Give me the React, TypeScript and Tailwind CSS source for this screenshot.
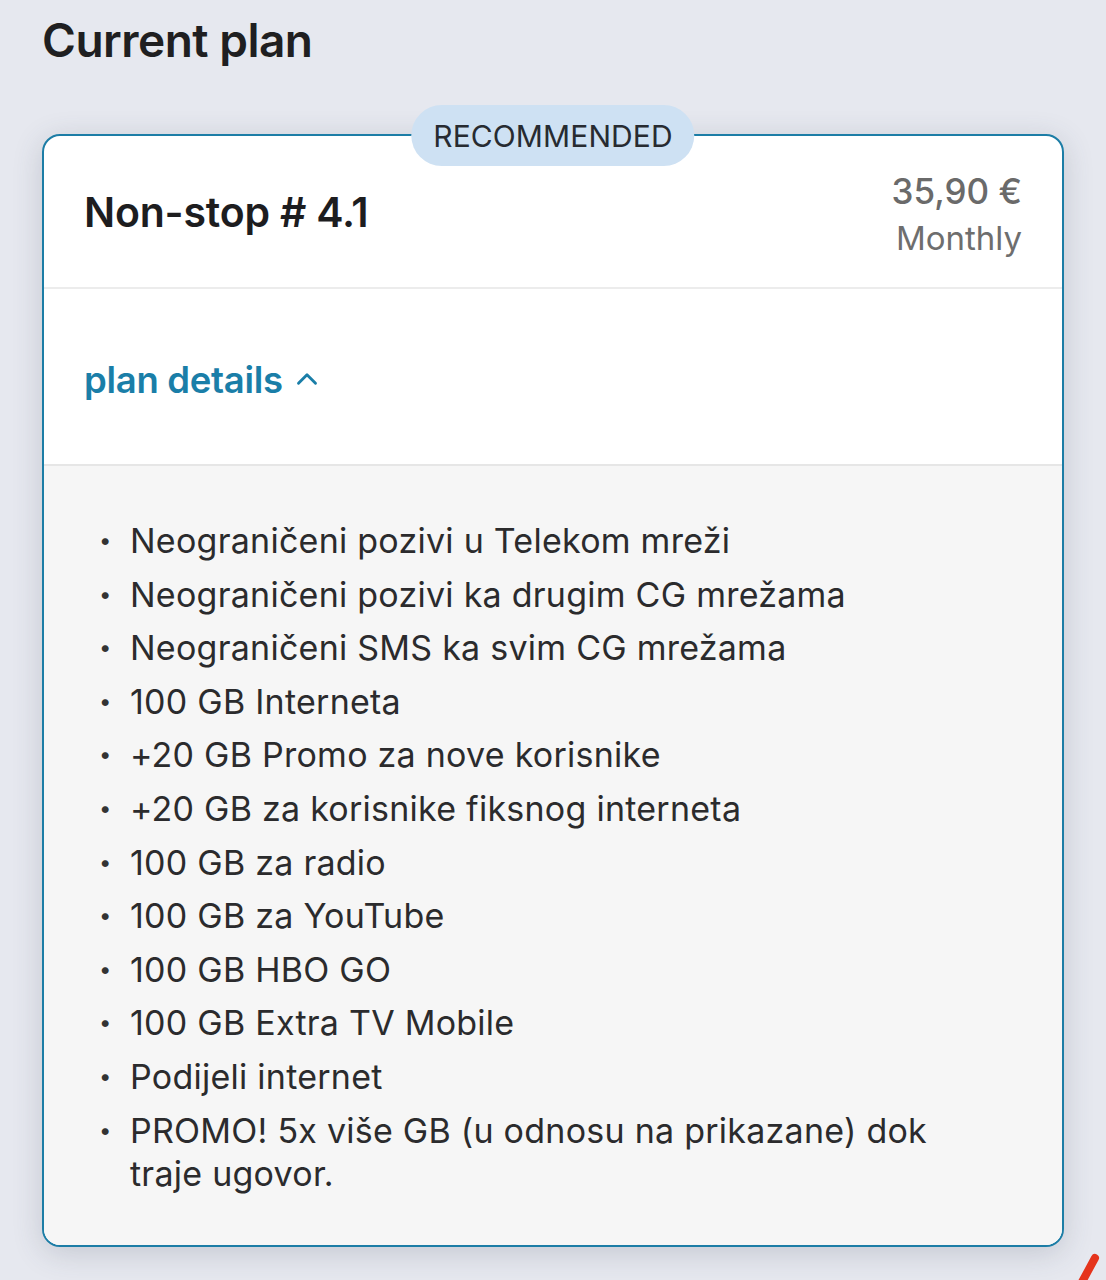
import { ChevronUp } from 'lucide-react';

const features = [
  'Neograničeni pozivi u Telekom mreži',
  'Neograničeni pozivi ka drugim CG mrežama',
  'Neograničeni SMS ka svim CG mrežama',
  '100 GB Interneta',
  '+20 GB Promo za nove korisnike',
  '+20 GB za korisnike fiksnog interneta',
  '100 GB za radio',
  '100 GB za YouTube',
  '100 GB HBO GO',
  '100 GB Extra TV Mobile',
  'Podijeli internet',
  'PROMO! 5x više GB (u odnosu na prikazane) dok traje ugovor.',
];

export default function App() {
  return (
    <div
      className="relative min-h-screen bg-[#e6e8ef] px-[42px] pt-[12px] pb-[40px] overflow-hidden"
      style={{ fontFamily: 'Inter, "Noto Sans", sans-serif' }}
    >
      <h1 className="text-[46px] leading-[56px] font-semibold tracking-[-0.5px] text-[#1f1f21]">Current plan</h1>

      <div className="relative mt-[66px] w-[1022px] rounded-[18px] border-2 border-[#1c7da6] bg-white shadow-[0_6px_30px_rgba(60,70,90,0.2)]">
        <div className="absolute left-1/2 top-[-31px] -translate-x-1/2 flex h-[61px] items-center rounded-full bg-[#cee1f3] px-[22px]">
          <span className="text-[30px] leading-none tracking-[0.1px] text-[#272b31]">RECOMMENDED</span>
        </div>

        <div className="flex h-[153px] items-center justify-between px-[40px] border-b-2 border-[#ececec]">
          <div className="text-[41px] font-semibold tracking-[-0.2px] text-[#1d1d1f] mt-[2px]">Non-stop # 4.1</div>
          <div className="flex flex-col items-end pt-[6px]">
            <div className="text-[35px] leading-[46px] font-medium text-[#6a6a6a]">35,90 €</div>
            <div className="text-[33px] leading-[48px] text-[#6e6e6e]">Monthly</div>
          </div>
        </div>

        <div className="flex h-[177px] items-center px-[40px] pt-[8px] border-b-2 border-[#e6e6e6]">
          <div className="flex items-center gap-[7px] text-[#1a7ea8]">
            <span className="text-[36.5px] font-semibold tracking-[-0.3px]">plan details</span>
            <ChevronUp size={34} strokeWidth={2} className="mt-[-4px]" />
          </div>
        </div>

        <div className="rounded-b-[16px] bg-[#f6f6f6] pl-[55px] pr-[64px] pt-[53px] pb-[50px]">
          <ul className="flex flex-col gap-[10.6px]">
            {features.map((f) => (
              <li key={f} className="flex text-[34px] leading-[43px] text-[#2b2b2d]">
                <span className="w-[31px] shrink-0 text-[22px] text-[#333]">•</span>
                <span className="tracking-[0.25px]">{f}</span>
              </li>
            ))}
          </ul>
        </div>
      </div>

      <svg className="absolute left-[1070px] top-[1250px]" width="40" height="40" viewBox="0 0 40 40">
        <line x1="12" y1="32" x2="25" y2="8" stroke="#e5341c" strokeWidth="8" strokeLinecap="round" />
      </svg>
    </div>
  );
}
